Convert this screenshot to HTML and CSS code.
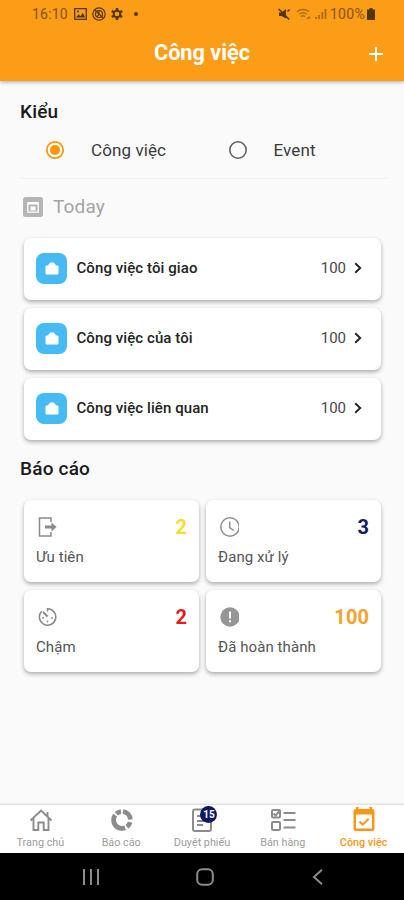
FILE: index.html
```
<!DOCTYPE html>
<html lang="vi">
<head>
<meta charset="utf-8">
<title>Công việc</title>
<link rel="stylesheet" href="styles.css">
</head>
<body>
<div class="phone">
  <header class="header">
    <div class="status">
      <div class="status-left">
        <span class="clock">16:10</span>
        <svg width="13" height="12" viewBox="0 0 13 12"><path fill="none" stroke="currentColor" stroke-width="1.3" d="M.7.7h11.6v10.6H.7z"/><path fill="currentColor" d="M2 9.5l2.5-3.3 2 2 2.3-3.5L11.2 9.500z"/><circle cx="4" cy="3.500" r="1" fill="currentColor"/></svg>
        <svg width="14" height="14" viewBox="0 0 14 14" fill="none" stroke="currentColor" stroke-width="1.200"><circle cx="7" cy="7" r="6.200"/><circle cx="7" cy="7" r="3.500"/><path d="M3 3l8 8M7 3v4l-2 3"/></svg>
        <svg width="12" height="12" viewBox="0 0 12 12" fill="none" stroke="currentColor"><circle cx="6" cy="6" r="3.300" stroke-width="1.900"/><path stroke-width="2.600" d="M6 0v2.500M6 9.500V12M.8 3l2 1.200M9.200 7.800l2 1.200M.8 9l2-1.200M9.200 4.200l2-1.200"/></svg>
        <span class="dot"></span>
      </div>
      <div class="status-right">
        <svg class="mute" width="12" height="12" viewBox="0 0 12 12"><path fill="currentColor" d="M1 4.500h2.500L8 1v9.500L3.500 8H1z"/><path stroke="currentColor" stroke-width="1.500" d="M.7 1l10.500 10.500M9.500 3.500L11.500 1.500"/></svg>
        <svg class="dim" width="15" height="12" viewBox="0 0 15 12" fill="none" stroke="currentColor" stroke-width="1.400"><path d="M.8 3.800Q7-.8 13.300 3.800M3 6.200q4-3 8 0M5 8.500q2-1.600 4 0"/><path d="M11 11l2-2 1 1.500"/></svg>
        <svg class="dim" width="12" height="12" viewBox="0 0 12 12" fill="none" stroke="currentColor" stroke-width="1.800"><path d="M1 11V9M4 11V7M7.300 11V4M10.500 11V1"/></svg>
        <span class="percent">100%</span>
        <svg width="8" height="12" viewBox="0 0 8 12"><path fill="currentColor" d="M2.500 0h3v1.500H8V12H0V1.500h2.500z"/></svg>
      </div>
    </div>
    <div class="appbar">
      <h1>Công việc</h1>
      <svg class="plus" width="14" height="14" viewBox="0 0 14 14"><path stroke="#fff" stroke-width="2" d="M7 0v14M0 7h14"/></svg>
    </div>
  </header>

  <main class="content">
    <h2 class="type-title">Kiểu</h2>
    <div class="radios">
      <div class="radio on"><svg width="20" height="20" viewBox="0 0 20 20"><circle cx="10" cy="10" r="8.200" fill="none" stroke="currentColor" stroke-width="1.700"/><circle cx="10" cy="10" r="5" fill="currentColor"/></svg><span>Công việc</span></div>
      <div class="radio"><svg width="20" height="20" viewBox="0 0 20 20"><circle cx="10" cy="10" r="8.200" fill="none" stroke="currentColor" stroke-width="1.600"/></svg><span>Event</span></div>
    </div>
    <div class="today">
      <svg width="20" height="20" viewBox="0 0 20 20"><rect width="20" height="20" rx="2.500" fill="#b5b5b5"/><path fill="none" stroke="#fff" stroke-width="1.300" d="M4.800 5.800h10.400v9.400H4.800z"/><path fill="#fff" d="M5 5h10v2.500H5zM7.500 9.500h5v4h-5z"/></svg>
      <span>Today</span>
    </div>

    <div class="tasks">
      <div class="card task">
        <span class="tile"><svg width="14" height="13" viewBox="0 0 14 13"><path fill="#fff" d="M1.500 3.500h11q1 0 1 1v7q0 1-1 1h-11q-1 0-1-1v-7q0-1 1-1z"/><path fill="#fff" d="M3.500 4V2.500L5.200.6h3.600l1.700 1.900V4z"/></svg></span>
        <span class="name">Công việc tôi giao</span><span class="count">100</span>
        <svg class="chev" width="8" height="12" viewBox="0 0 8 12"><path fill="none" stroke="#222" stroke-width="1.900" d="M1.200 1.300L6.200 6l-5 4.700"/></svg>
      </div>
      <div class="card task">
        <span class="tile"><svg width="14" height="13" viewBox="0 0 14 13"><path fill="#fff" d="M1.500 3.500h11q1 0 1 1v7q0 1-1 1h-11q-1 0-1-1v-7q0-1 1-1z"/><path fill="#fff" d="M3.500 4V2.500L5.200.6h3.600l1.700 1.900V4z"/></svg></span>
        <span class="name">Công việc của tôi</span><span class="count">100</span>
        <svg class="chev" width="8" height="12" viewBox="0 0 8 12"><path fill="none" stroke="#222" stroke-width="1.900" d="M1.200 1.300L6.200 6l-5 4.700"/></svg>
      </div>
      <div class="card task">
        <span class="tile"><svg width="14" height="13" viewBox="0 0 14 13"><path fill="#fff" d="M1.500 3.500h11q1 0 1 1v7q0 1-1 1h-11q-1 0-1-1v-7q0-1 1-1z"/><path fill="#fff" d="M3.500 4V2.500L5.200.6h3.600l1.700 1.900V4z"/></svg></span>
        <span class="name">Công việc liên quan</span><span class="count">100</span>
        <svg class="chev" width="8" height="12" viewBox="0 0 8 12"><path fill="none" stroke="#222" stroke-width="1.900" d="M1.200 1.300L6.200 6l-5 4.700"/></svg>
      </div>
    </div>

    <h2 class="report-title">Báo cáo</h2>
    <div class="reports">
      <div class="card report">
        <div class="top">
          <svg width="22" height="20" viewBox="0 0 22 20" fill="none" stroke="#8a8a8a"><path stroke-width="1.500" d="M16 5V1H4.500v18H16v-4"/><path stroke-width="3" d="M10 10h7"/><path fill="#8a8a8a" stroke="none" d="M16.500 5.500l5 4.500-5 4.500z"/></svg>
          <b class="yellow">2</b>
        </div>
        <span>Ưu tiên</span>
      </div>
      <div class="card report">
        <div class="top">
          <svg width="22" height="20" viewBox="-2 0 22 20" fill="none" stroke="#909090" stroke-width="1.500"><circle cx="11" cy="10" r="9.200"/><path d="M10.700 4.500v6l4 3"/></svg>
          <b class="navy">3</b>
        </div>
        <span>Đang xử lý</span>
      </div>
      <div class="card report">
        <div class="top">
          <svg width="22" height="20" viewBox="-2.500 0 22 20" fill="none" stroke="#888" stroke-width="1.500"><path d="M10 4.500V1.800A8.200 8.200 0 1 1 4.200 4.300"/><path stroke-width="1.900" d="M5.500 5l4.500 4.500"/><g fill="#888" stroke="none"><circle cx="5.500" cy="11" r=".9"/><circle cx="14.500" cy="11" r=".9"/><circle cx="10" cy="14.500" r=".9"/></g></svg>
          <b class="red">2</b>
        </div>
        <span>Chậm</span>
      </div>
      <div class="card report">
        <div class="top">
          <svg width="22" height="20" viewBox="-2 0 22 20"><circle cx="11" cy="10" r="9.700" fill="#969696"/><path stroke="#fff" stroke-width="2" d="M11 4.500v7M11 13.300v2"/></svg>
          <b class="orange">100</b>
        </div>
        <span>Đã hoàn thành</span>
      </div>
    </div>
  </main>

  <nav class="tabs">
    <div class="tab"><svg width="24" height="24" viewBox="0 0 24 24" fill="none" stroke="currentColor" stroke-width="1.900"><path d="M1.500 12.500L12 2.500l10.500 10M4.500 10.500V22H9.300v-7.500h5.400V22h4.800V10.500M18.500 8V4"/></svg><span>Trang chủ</span></div>
    <div class="tab"><svg width="24" height="24" viewBox="0 0 24 24" fill="none" stroke="currentColor" stroke-width="4.800"><circle cx="12" cy="12" r="8.400" pathLength="100" stroke-dasharray="11 4 41 3 10 4 22 5" stroke-dashoffset="-4"/></svg><span>Báo cáo</span></div>
    <div class="tab">
      <div class="badged"><svg width="24" height="26" viewBox="0 0 24 26" fill="none" stroke="currentColor" stroke-width="2"><rect x="3" y="2.500" width="18" height="21.500" rx="2"/><path d="M7 9h6M7 14h9M7 18h6"/></svg><span class="badge">15</span></div>
      <span>Duyệt phiếu</span></div>
    <div class="tab"><svg width="26" height="24" viewBox="0 0 26 24" fill="none" stroke="currentColor" stroke-width="2"><rect x="2" y="2" width="8" height="7.500" rx="1"/><rect x="2" y="14" width="8" height="8" rx="1"/><path d="M3.500 5.500l2 2L10.500 2M13.500 5h12M13.500 12h12M13.500 19.500h12"/></svg><span>Bán hàng</span></div>
    <div class="tab active"><svg width="24" height="26" viewBox="0 0 24 26"><path fill="currentColor" fill-rule="evenodd" d="M4 1h2.500v2h11V1H20v2q2.500 0 2.500 2.500v17q0 2.500-2.500 2.500H4q-2.500 0-2.500-2.500v-17Q1.500 3 4 3zM4 8.500v14h16v-14z"/><path fill="none" stroke="currentColor" stroke-width="2" d="M7.500 15.500l3.200 3.200 6-6"/></svg><span>Công việc</span></div>
  </nav>
  <footer class="system">
    <svg width="16" height="16" viewBox="0 0 16 16"><path stroke="#8c8c8c" stroke-width="2" d="M1 0v16M8 0v16M15 0v16"/></svg>
    <svg width="18" height="18" viewBox="0 0 18 18"><rect x="1.200" y="1.200" width="15.600" height="15.600" rx="5" fill="none" stroke="#8c8c8c" stroke-width="2"/></svg>
    <svg width="16" height="16" viewBox="0 0 16 16"><path fill="none" stroke="#8c8c8c" stroke-width="2" d="M12 .8L4 8l8 7.200"/></svg>
  </footer>
</div>
</body>
</html>
```
FILE: styles.css
```
* { box-sizing: border-box; }
body { margin: 0; font-family: Roboto, sans-serif; color: #222; }
svg { display: block; flex: none; }
h1, h2 { margin: 0; font-weight: 500; white-space: nowrap; }
.phone { width: 404px; height: 900px; display: flex; flex-direction: column; background: #fafafa; overflow: hidden; }

.header { height: 81px; background: #fc9d18; box-shadow: 0 1px 4px rgba(0, 0, 0, .35); flex: none; }
.status { height: 27px; display: flex; justify-content: space-between; padding: 0 29px 0 32px; color: #53350a; font-size: 14px; }
.status-left, .status-right { display: flex; align-items: center; }
.status-left { gap: 5px; }
.status-right { gap: 4px; }
.clock { width: 37px; color: #85540f; letter-spacing: .2px; }
.percent { color: #85540f; letter-spacing: .3px; margin: 0 -2px 0 -1.500px; }
.mute { margin-right: 2px; }
.dim { color: #ad6c12; }
.dot { width: 4px; height: 4px; border-radius: 50%; background: #53350a; margin-left: 6px; }
.appbar { height: 54px; display: flex; align-items: center; justify-content: center; position: relative; color: #fff; }
.appbar h1 { font-size: 21.700px; font-weight: 700; line-height: 50px; padding-bottom: 2px; }
.plus { position: absolute; right: 21px; top: 20px; }

.content { flex: 1; padding: 18px 16px 0 20px; }
.content h2 { font-size: 19px; line-height: 26px; color: #1a1a1a; letter-spacing: .2px; }
.radios { display: grid; grid-template-columns: 182.500px 1fr; height: 54px; padding-left: 25px; border-bottom: 1px solid #f0f0f0; }
.radio { display: flex; align-items: center; gap: 26px; font-size: 17px; color: #3a3a3a; height: 50px; letter-spacing: .1px; }
.radio svg { color: #606060; }
.radio.on svg { color: #fb960b; }
.today { display: flex; align-items: center; gap: 10px; height: 55px; padding-left: 3px; font-size: 19px; color: #a4a4a4; letter-spacing: .15px; }
.card { background: #fff; border-radius: 7px; box-shadow: 0 2px 4px rgba(0, 0, 0, .32); }
.tasks { display: grid; gap: 8px; padding: 3px 2px 0 4px; width: 363px; margin-top: 1px; }
.task { height: 62px; display: flex; align-items: center; padding: 0 19px 2px 12px; }
.tile { width: 31px; height: 31px; border-radius: 8px; background: #45baf3; display: grid; place-items: center; margin-right: 9.500px; }
.name { font-size: 15px; font-weight: 500; flex: 1; white-space: nowrap; letter-spacing: .08px; }
.count { font-size: 15px; color: #484848; margin-right: 8px; }
.report-title { margin-top: 16px; }
.reports { display: grid; grid-template-columns: 175px 175px; gap: 8px 7px; padding: 18px 0 0 4px; }
.report { height: 82px; padding: 16px 12px 0; font-size: 15px; color: #555; letter-spacing: .08px; }
.top { display: flex; align-items: center; justify-content: space-between; height: 22px; margin-bottom: 10px; }
.top svg { margin-left: -1px; }
.report > span { display: block; line-height: 18px; }
.top b { font-size: 20px; font-weight: 700; line-height: 20px; }
.yellow { color: #f7dd2b; }
.navy { color: #111b68; }
.red { color: #e31c1c; }
.orange { color: #f7a22c; }

.tabs { height: 49px; flex: none; display: grid; grid-template-columns: repeat(5, 1fr); background: #fff; border-top: 1px solid #e2e2e2; box-shadow: 0 -1px 1px #eee; }
.tab { display: flex; flex-direction: column; align-items: center; justify-content: flex-end; color: #8c8c8c; font-size: 10.800px; white-space: nowrap; padding-bottom: 4px; }
.tab > span { line-height: 13px; color: #9c9c9c; }
.tab > svg { margin: 0 0 4px 1px; }
.badged { position: relative; margin: 0 0 3px 1px; }
.tab.active { color: #fb9714; }
.tab.active > span { color: #fb9714; font-weight: 500; }
.badge { position: absolute; left: 10px; top: -1px; width: 17px; height: 17px; border-radius: 50%; background: #101866; color: #fff; font-size: 10px; font-weight: 700; line-height: 17px; text-align: center; }
.system { height: 47px; flex: none; background: #000; display: flex; align-items: center; justify-content: space-between; padding: 0 78px 0 83px; }
```
